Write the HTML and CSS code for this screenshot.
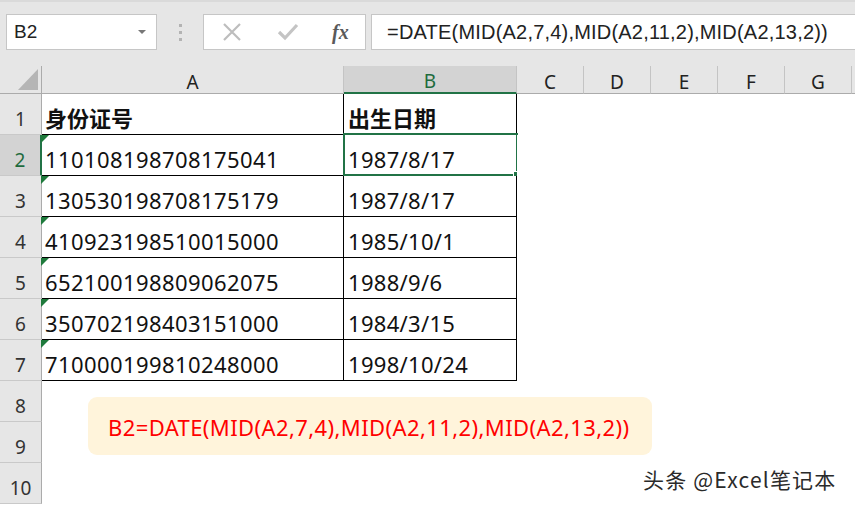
FILE: index.html
```html
<!DOCTYPE html>
<html lang="zh">
<head>
<meta charset="utf-8">
<title>Excel</title>
<link rel="stylesheet" href="styles.css">
</head>
<body>
<div class="app">
  <div class="toolbar">
    <div class="namebox"><span class="nb-text">B2</span><span class="caret"></span></div>
    <div class="grip"><i></i><i></i><i></i></div>
    <div class="fxbox">
      <svg class="ico-x" width="20" height="18" viewBox="0 0 20 18"><path d="M2 1 L18 17 M18 1 L2 17" stroke="#bdbdbd" stroke-width="2.2" fill="none"/></svg>
      <svg class="ico-ok" width="22" height="18" viewBox="0 0 22 18"><path d="M2 9 L8 15 L20 2" stroke="#c4c4c4" stroke-width="3.2" fill="none"/></svg>
      <span class="fx">fx</span>
    </div>
    <div class="formula">=DATE(MID(A2,7,4),MID(A2,11,2),MID(A2,13,2))</div>
  </div>

  <div class="sheet">
    <div class="corner"><span class="corner-tri"></span></div>
    <div class="ch">A</div>
    <div class="ch ch-sel">B</div>
    <div class="ch">C</div>
    <div class="ch">D</div>
    <div class="ch">E</div>
    <div class="ch">F</div>
    <div class="ch">G</div>
    <div class="ch ch-end"></div>

    <div class="rh">1</div>
    <div class="c t ta head">身份证号</div>
    <div class="c t tb head">出生日期</div>
    <div class="c"></div><div class="c"></div><div class="c"></div><div class="c"></div><div class="c"></div><div class="c"></div>

    <div class="rh rh-sel">2</div>
    <div class="c t ta"><span class="flag"></span>110108198708175041</div>
    <div class="c t tb sel">1987/8/17<span class="sel-box"><span class="handle"></span></span></div>
    <div class="c"></div><div class="c"></div><div class="c"></div><div class="c"></div><div class="c"></div><div class="c"></div>

    <div class="rh">3</div>
    <div class="c t ta"><span class="flag"></span>130530198708175179</div>
    <div class="c t tb">1987/8/17</div>
    <div class="c"></div><div class="c"></div><div class="c"></div><div class="c"></div><div class="c"></div><div class="c"></div>

    <div class="rh">4</div>
    <div class="c t ta"><span class="flag"></span>410923198510015000</div>
    <div class="c t tb">1985/10/1</div>
    <div class="c"></div><div class="c"></div><div class="c"></div><div class="c"></div><div class="c"></div><div class="c"></div>

    <div class="rh">5</div>
    <div class="c t ta"><span class="flag"></span>652100198809062075</div>
    <div class="c t tb">1988/9/6</div>
    <div class="c"></div><div class="c"></div><div class="c"></div><div class="c"></div><div class="c"></div><div class="c"></div>

    <div class="rh">6</div>
    <div class="c t ta"><span class="flag"></span>350702198403151000</div>
    <div class="c t tb">1984/3/15</div>
    <div class="c"></div><div class="c"></div><div class="c"></div><div class="c"></div><div class="c"></div><div class="c"></div>

    <div class="rh">7</div>
    <div class="c t ta"><span class="flag"></span>710000199810248000</div>
    <div class="c t tb">1998/10/24</div>
    <div class="c"></div><div class="c"></div><div class="c"></div><div class="c"></div><div class="c"></div><div class="c"></div>

    <div class="rh">8</div>
    <div class="c"></div><div class="c"></div><div class="c"></div><div class="c"></div><div class="c"></div><div class="c"></div><div class="c"></div><div class="c"></div>

    <div class="rh">9</div>
    <div class="c"></div><div class="c"></div><div class="c"></div><div class="c"></div><div class="c"></div><div class="c"></div><div class="c"></div><div class="c"></div>

    <div class="rh">10</div>
    <div class="c"></div><div class="c"></div><div class="c"></div><div class="c"></div><div class="c"></div><div class="c"></div><div class="c"></div><div class="c"></div>

    <div class="callout">B2=DATE(MID(A2,7,4),MID(A2,11,2),MID(A2,13,2))</div>
    <div class="watermark">头条 @Excel笔记本</div>
  </div>
</div>
</body>
</html>
```

FILE: styles.css
```css
* { box-sizing: border-box; }
html, body { margin: 0; padding: 0; }
body {
  width: 855px;
  height: 505px;
  overflow: hidden;
  background: #ffffff;
  font-family: "Noto Sans", "Noto Sans CJK SC", sans-serif;
}
.app { width: 855px; height: 505px; overflow: hidden; }

/* ---------- formula bar ---------- */
.toolbar {
  height: 66px;
  background: #e6e6e6;
  display: flex;
  align-items: flex-start;
  padding-top: 12px;
  border-top: 2px solid #dadada;
}
.toolbar > div { height: 36px; }
.namebox {
  margin-left: 6px;
  width: 151px;
  background: #fff;
  border: 1px solid #c6c6c6;
  display: flex;
  align-items: center;
  justify-content: space-between;
  padding: 0 10px 0 7px;
}
.nb-text {
  font-family: "Liberation Sans", Arial, sans-serif;
  font-size: 19px;
  color: #222;
}
.caret {
  width: 0; height: 0;
  border-left: 4px solid transparent;
  border-right: 4px solid transparent;
  border-top: 4px solid #777;
}
.grip {
  width: 46px;
  display: flex;
  flex-direction: column;
  align-items: center;
  justify-content: center;
  gap: 4px;
}
.grip i { display: block; width: 3px; height: 3px; background: #b3b3b3; }
.fxbox {
  width: 163px;
  background: #fff;
  border: 1px solid #c6c6c6;
  display: flex;
  align-items: center;
  padding-left: 18px;
}
.ico-x { margin-right: 35px; }
.ico-ok { margin-right: 33px; }
.fx {
  font-family: "Liberation Serif", "Times New Roman", serif;
  font-style: italic;
  font-weight: bold;
  font-size: 20px;
  color: #5a5a5a;
}
.formula {
  margin-left: 5px;
  flex: 1;
  margin-right: -3px;
  background: #fff;
  border: 1px solid #c6c6c6;
  font-family: "Liberation Sans", Arial, sans-serif;
  font-size: 20px;
  letter-spacing: 0.2px;
  color: #222;
  display: flex;
  align-items: center;
  padding-left: 15px;
  white-space: nowrap;
}

/* ---------- sheet grid ---------- */
.sheet {
  position: relative;
  display: grid;
  grid-template-columns: 42px 302px 173px 67px 67px 67px 67px 67px 3px;
  grid-template-rows: 28px repeat(10, 41px);
}
.corner {
  background: #e6e6e6;
  border-right: 1px solid #ababab;
  border-bottom: 1px solid #ababab;
  display: flex;
  align-items: flex-end;
  justify-content: flex-end;
  padding: 0 3px 3px 0;
}
.corner-tri {
  width: 0; height: 0;
  border-left: 20px solid transparent;
  border-bottom: 21px solid #b5b5b5;
}
.ch {
  background: #e6e6e6;
  border-right: 1px solid #c4c4c4;
  border-bottom: 1px solid #ababab;
  display: flex;
  align-items: center;
  justify-content: center;
  padding-top: 5px;
  font-size: 19px;
  color: #222;
}
.ch-sel {
  background: #d3d3d3;
  color: #1e6b3d;
  border-bottom: 2px solid #217346;
  padding-top: 4px;
}
.ch-end { border-right: none; }
.rh {
  background: #e6e6e6;
  border-right: 1px solid #ababab;
  border-bottom: 1px solid #c9c9c9;
  display: flex;
  align-items: center;
  justify-content: center;
  padding-top: 9px;
  font-size: 19px;
  color: #333;
}
.rh-sel {
  background: #d3d3d3;
  color: #1e6b3d;
  border-right: 2px solid #217346;
}
.c {
  background: #fff;
  position: relative;
  display: flex;
  align-items: center;
  padding-top: 7px;
  font-size: 22px;
  color: #111;
  white-space: nowrap;
}
.t {
  border-right: 1px solid #000;
  border-bottom: 1px solid #000;
}
.ta { padding-left: 3px; letter-spacing: 0.42px; }
.tb { padding-left: 4px; letter-spacing: 0.3px; }
.head {
  font-weight: bold;
  font-size: 22px;
  font-family: "Noto Sans CJK SC", sans-serif;
  letter-spacing: 0;
  padding-top: 6px;
}
.flag {
  position: absolute;
  z-index: 2;
  left: -1px;
  top: 0;
  width: 0; height: 0;
  border-top: 8px solid #1f7a3c;
  border-right: 8px solid transparent;
}
.sel-box {
  position: absolute;
  top: -2px;
  left: -1px;
  right: -2px;
  bottom: -1px;
  border: 2px solid #217346;
}
.handle {
  position: absolute;
  right: -4px;
  bottom: -4px;
  width: 7px;
  height: 7px;
  background: #217346;
  border: 1px solid #fff;
}

/* ---------- overlays ---------- */
.callout {
  position: absolute;
  left: 88px;
  top: 331px;
  width: 564px;
  height: 58px;
  border-radius: 9px;
  background: #fff4db;
  color: #ff0000;
  font-size: 22px;
  letter-spacing: 0.4px;
  display: flex;
  align-items: center;
  padding-left: 20px;
  padding-top: 2px;
  white-space: nowrap;
}
.watermark {
  position: absolute;
  left: 643px;
  top: 398px;
  font-size: 21px;
  letter-spacing: 1.2px;
  color: #2a2a2a;
  white-space: nowrap;
  text-shadow: 0 0 2px #fff, 0 0 2px #fff;
  font-family: "Noto Sans CJK SC", sans-serif;
}
```
